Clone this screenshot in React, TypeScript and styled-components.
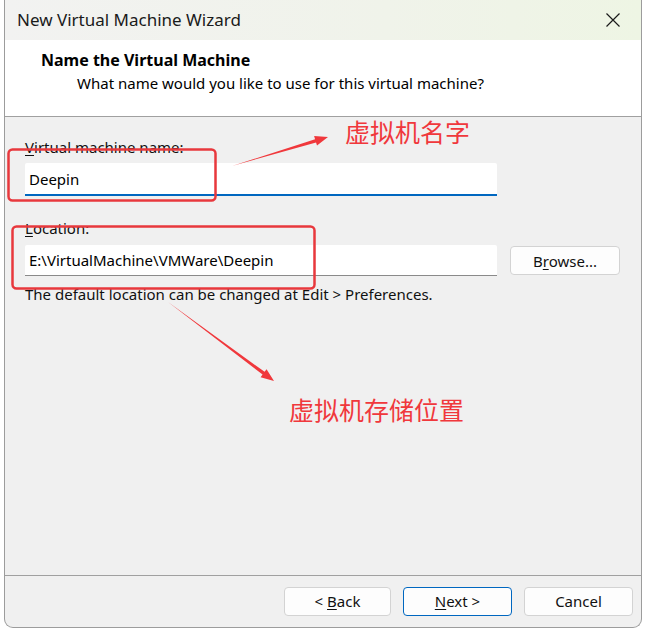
import React from "react";
import styled, { createGlobalStyle } from "styled-components";

const Global = createGlobalStyle`
  html, body { margin: 0; padding: 0; background: #ffffff; }
  body { font-family: "Noto Sans", "Noto Sans CJK SC", sans-serif; }
`;

const Stage = styled.div`
  position: relative;
  width: 646px;
  height: 630px;
  overflow: hidden;
  background: #ffffff;
`;

const Window = styled.div`
  margin-left: 4px;
  width: 638px;
  height: 628px;
  border: 1px solid #9c9c9c;
  border-top: none;
  border-radius: 0 0 9px 9px;
  box-sizing: border-box;
  display: flex;
  flex-direction: column;
  overflow: hidden;
  background: #f0f0f0;
  font-family: "Noto Sans", sans-serif;
  color: #000;
`;

const TitleBar = styled.div`
  height: 40px;
  flex: none;
  display: flex;
  align-items: center;
  justify-content: space-between;
  padding: 0 20px 0 12px;
  background: linear-gradient(90deg, #f2f2f1 0%, #f0f3ea 60%, #eef5e4 100%);
`;

const Title = styled.div`
  font-size: 17px;
  color: #1a1a1a;
  margin-top: -2px;
`;

const Header = styled.div`
  height: 77px;
  flex: none;
  background: #ffffff;
  border-bottom: 1px solid #a0a0a0;
  padding: 9px 0 0 36px;
  box-sizing: border-box;
`;

const Heading = styled.div`
  font-weight: 700;
  font-size: 16px;
  line-height: 22px;
`;

const Sub = styled.div`
  font-size: 15px;
  line-height: 22px;
  margin-left: 36px;
  margin-top: 1px;
`;

const Body = styled.div`
  flex: 1;
  padding: 19px 0 0 20px;
  display: flex;
  flex-direction: column;
`;

const Label = styled.div<{ $mt?: number }>`
  font-size: 15px;
  line-height: 22px;
  margin-top: ${(p) => p.$mt ?? 0}px;
  color: #111;
  u { text-decoration-thickness: 1px; text-underline-offset: 2px; }
`;

const Row = styled.div<{ $mt?: number }>`
  display: flex;
  align-items: center;
  gap: 13px;
  margin-top: ${(p) => p.$mt ?? 5}px;
`;

const Input = styled.div<{ $focus?: boolean }>`
  width: 472px;
  height: ${(p) => (p.$focus ? 33 : 31)}px;
  box-sizing: border-box;
  background: #ffffff;
  border-bottom: ${(p) => (p.$focus ? "2px solid #0067c0" : "1px solid #8a8a8a")};
  border-radius: 2px 2px 0 0;
  display: flex;
  align-items: center;
  padding: 0 4px;
  font-size: 15px;
`;

const Hint = styled.div`
  font-size: 15px;
  line-height: 22px;
  margin-top: 7px;
  color: #111;
`;

const Footer = styled.div`
  height: 50px;
  flex: none;
  border-top: 1px solid #a0a0a0;
  display: flex;
  align-items: center;
  justify-content: flex-end;
  gap: 12px;
  padding: 0 8px 1px 0;
`;

const Btn = styled.div<{ $primary?: boolean; $w?: number }>`
  width: ${(p) => p.$w ?? 108}px;
  height: 29px;
  box-sizing: border-box;
  background: #fdfdfd;
  border: 1px solid ${(p) => (p.$primary ? "#0067c0" : "#d3d3d3")};
  border-radius: 4px;
  display: flex;
  align-items: center;
  justify-content: center;
  font-size: 15px;
  color: #111;
  u { text-decoration-thickness: 1px; text-underline-offset: 2px; }
`;

const Overlay = styled.svg`
  position: absolute;
  left: 0;
  top: 0;
  pointer-events: none;
`;

const Note = styled.div<{ $x: number; $y: number }>`
  position: absolute;
  left: ${(p) => p.$x}px;
  top: ${(p) => p.$y}px;
  font-family: "Noto Sans CJK SC", sans-serif;
  font-size: 25px;
  line-height: 30px;
  color: #f0383c;
`;

function Arrow({ x1, y1, x2, y2 }: { x1: number; y1: number; x2: number; y2: number }) {
  const dx = x2 - x1;
  const dy = y2 - y1;
  const len = Math.hypot(dx, dy);
  const ux = dx / len;
  const uy = dy / len;
  const px = -uy;
  const py = ux;
  const head = 13;
  const hw = 5;
  const bx = x2 - ux * head;
  const by = y2 - uy * head;
  const sw = 1.7;
  const pts = [
    `${x1},${y1}`,
    `${bx + px * sw},${by + py * sw}`,
    `${bx + px * hw},${by + py * hw}`,
    `${x2},${y2}`,
    `${bx - px * hw},${by - py * hw}`,
    `${bx - px * sw},${by - py * sw}`,
  ].join(" ");
  return <polygon points={pts} fill="#f0383c" />;
}

export default function App() {
  return (
    <Stage>
      <Global />
      <Window>
        <TitleBar>
          <Title>New Virtual Machine Wizard</Title>
          <svg width="16" height="16" viewBox="0 0 16 16">
            <path d="M1.5 1.5 L14.5 14.5 M14.5 1.5 L1.5 14.5" stroke="#1a1a1a" strokeWidth="1.2" fill="none" />
          </svg>
        </TitleBar>
        <Header>
          <Heading>Name the Virtual Machine</Heading>
          <Sub>What name would you like to use for this virtual machine?</Sub>
        </Header>
        <Body>
          <Label>
            <u>V</u>irtual machine name:
          </Label>
          <Row>
            <Input $focus>Deepin</Input>
          </Row>
          <Label $mt={21}>
            <u>L</u>ocation:
          </Label>
          <Row $mt={6}>
            <Input>E:\VirtualMachine\VMWare\Deepin</Input>
            <Btn $w={110}>
              <span>
                B<u>r</u>owse...
              </span>
            </Btn>
          </Row>
          <Hint>The default location can be changed at Edit &gt; Preferences.</Hint>
        </Body>
        <Footer>
          <Btn $w={107}>
            <span>
              &lt; <u>B</u>ack
            </span>
          </Btn>
          <Btn $primary $w={109}>
            <span>
              <u>N</u>ext &gt;
            </span>
          </Btn>
          <Btn $w={109}>
            <span>Cancel</span>
          </Btn>
        </Footer>
      </Window>
      <Overlay width="646" height="630" viewBox="0 0 646 630">
        <rect x="8.5" y="149.5" width="207" height="51" rx="4" fill="none" stroke="#e8383d" strokeWidth="2.5" />
        <rect x="12.5" y="226.5" width="302" height="62" rx="4" fill="none" stroke="#e8383d" strokeWidth="2.5" />
        <Arrow x1={232} y1={166} x2={328} y2={137} />
        <Arrow x1={168} y1={302} x2={274} y2={381} />
      </Overlay>
      <Note $x={345} $y={116}>虚拟机名字</Note>
      <Note $x={289} $y={394}>虚拟机存储位置</Note>
    </Stage>
  );
}
